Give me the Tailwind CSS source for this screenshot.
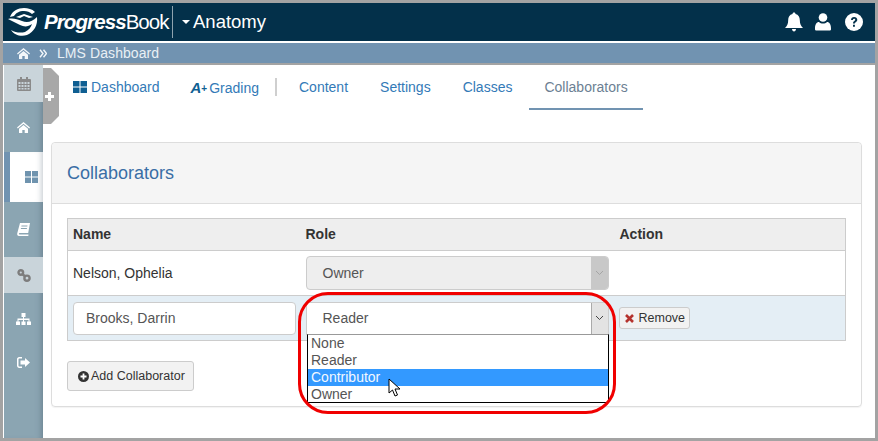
<!DOCTYPE html>
<html lang="en">
<head>
  <meta charset="UTF-8" />
  <title>Collaborators</title>
  <script src="https://cdn.jsdelivr.net/npm/@tailwindcss/browser@4"></script>
</head>
<body class="bg-[#a3a3a3] font-['Liberation_Sans',Arial,sans-serif]">
  <div class="w-[878px] h-[441px] pt-[3px] pl-[3px] pr-[3px] pb-[3px] overflow-hidden">
    <div class="relative w-[872px] h-[435px] bg-white flex flex-col overflow-hidden">

      <!-- top bar -->
      <header class="h-[38px] bg-[#03304a] flex items-center text-white shrink-0">
        <svg class="ml-[4px] w-[31px] h-[30px]" viewBox="0 0 31 30" fill="white">
          <path d="M3 10C5 4 11 1 17 1c4 0 8 1 11 4l-3 2c-2-2-5-3-8-3C12 4 9 6 7 9z"/>
          <path d="M9 10l8-3 9 3-4 1-5-2-4 2z"/>
          <path d="M1 12c5-1 9 0 14 2 5 2 10 1 15-4 1 8-3 15-10 18-6 2-13 0-16-5 5 3 10 3 14 2 4-2 6-5 7-8-4 3-8 3-12 1-4-2-8-4-12-6z"/>
        </svg>
        <div class="ml-[6px] w-[128px] text-[20.5px] leading-none tracking-[-0.9px] italic font-bold whitespace-nowrap">Progress<span class="font-normal not-italic tracking-[-1px]">Book</span></div>
        <div class="w-px h-[32px] bg-[#8fa3af]"></div>
        <div class="ml-[9px] w-0 h-0 border-x-[4px] border-x-transparent border-t-[4px] border-t-white"></div>
        <div class="ml-[3px] text-[18.5px] leading-none">Anatomy</div>
        <div class="ml-auto flex items-center">
          <svg class="w-[20px] h-[20px]" viewBox="0 0 20 20" fill="white"><path d="M10 0.500c1 0 1.500.700 1.500 1.500 3 .7 4.300 3 4.300 6 0 4 1.200 6 3.200 8H1c2-2 3.200-4 3.200-8 0-3 1.300-5.300 4.300-6 0-.8.500-1.500 1.500-1.500z"/><path d="M8 17h4c0 1.500-1 2.500-2 2.500S8 18.500 8 17z"/></svg>
          <svg class="ml-[11px] w-[16px] h-[18px]" viewBox="0 0 16 18" fill="white"><circle cx="8" cy="4.500" r="4.300"/><path d="M1 17.500c-1 0-1-1-1-2 0-4 1.500-6.500 4-6.500 1 1 2.500 1.600 4 1.600S11 10 12 9c2.500 0 4 2.500 4 6.500 0 1 0 2-1 2z"/></svg>
          <svg class="ml-[14px] mr-[12px] w-[18px] h-[18px]" viewBox="0 0 18 18"><circle cx="9" cy="9" r="9" fill="white"/><path d="M6 7c0-2 1.300-3 3.100-3C11 4 12.300 5.100 12.300 6.800c0 2.300-2.400 2.300-2.400 3.800H8c0-2.600 2.200-2.600 2.200-3.800 0-.6-.5-1-1.100-1-.7 0-1.100.4-1.200 1.200zM8 11.800h1.900v2H8z" fill="#03304a"/></svg>
        </div>
      </header>

      <div class="h-[2px] bg-white shrink-0"></div>

      <!-- breadcrumb -->
      <div class="h-[20px] bg-[#7193b1] flex items-center text-[#e9f0f5] text-[14px] shrink-0">
        <svg class="ml-[14px] w-[13px] h-[11px]" viewBox="0 0 13 11" fill="#f2f6f9"><path d="M6.500 0L13 5.600l-.8.900L6.500 1.700.8 6.500 0 5.600z"/><path d="M2 6.700l4.500-3.800L11 6.700V11H7.700V8H5.300v3H2z"/></svg>
        <svg class="ml-[9px] w-[8px] h-[9px]" viewBox="0 0 8 9" fill="none" stroke="#f2f6f9" stroke-width="1.400"><path d="M1 .7l3 3.800-3 3.800M4.500 .7l3 3.800-3 3.800"/></svg>
        <span class="ml-[10px] leading-none tracking-[0.08px]">LMS Dashboard</span>
      </div>

      <div class="h-[2px] bg-[#a3a3a3] shrink-0"></div>

      <div class="flex flex-1 min-h-0">
        <!-- left nav -->
        <nav class="w-[39px] ml-px bg-[#8ba5b2] shrink-0 flex flex-col shadow-[inset_-6px_0_6px_-5px_rgba(70,90,105,0.5)]">
          <div class="h-[37px] bg-[#c9d4da] flex items-center justify-center">
            <svg class="w-[14px] h-[14px]" viewBox="0 0 14 14" fill="#8a8a8a"><path fill-rule="evenodd" d="M1 2h2V0h2v2h4V0h2v2h2a1 1 0 0 1 1 1v10a1 1 0 0 1-1 1H1a1 1 0 0 1-1-1V3a1 1 0 0 1 1-1zm.500 3v2h2V5zm3 0v2h2V5zm3 0v2h2V5zm3 0v2h2V5zm-9 3v2h2V8zm3 0v2h2V8zm3 0v2h2V8zm3 0v2h2V8zm-9 3v1.500h2V11zm3 0v1.500h2V11zm3 0v1.500h2V11zm3 0v1.500h2V11z"/></svg>
          </div>
          <div class="h-[50px] flex items-center justify-center">
            <svg class="w-[13px] h-[11px]" viewBox="0 0 13 11" fill="white"><path d="M6.500 0L13 5.600l-.8.900L6.500 1.700.8 6.500 0 5.600z"/><path d="M2 6.700l4.500-3.800L11 6.700V11H7.700V8H5.300v3H2z"/></svg>
          </div>
          <div class="h-[50px] bg-white flex items-center border-l-[6px] border-l-[#7193b1] shadow-[inset_-6px_0_6px_-5px_rgba(70,90,105,0.35)]">
            <svg class="ml-[15px] w-[13px] h-[12px]" viewBox="0 0 13 12" fill="#6f93ae"><path d="M0 0h6v5.500H0zM7 0h6v5.500H7zM0 6.500h6V12H0zM7 6.500h6V12H7z"/></svg>
          </div>
          <div class="h-[55px] flex items-center justify-center">
            <svg class="w-[13px] h-[13px]" viewBox="0 0 13 13" fill="white"><path d="M3 0h10l-1.800 10H2.600c-.9 0-1 1.400 0 1.500h8.900l-.2 1.500H2C.5 13 0 12 .2 10.500zM4.500 2.500l-.2 1h6l.2-1zM4 5l-.2 1h6l.2-1z" fill-rule="evenodd"/></svg>
          </div>
          <div class="h-[36px] bg-[#c9d4da] flex items-center justify-center">
            <svg class="w-[14px] h-[13px]" viewBox="0 0 14 13" fill="none" stroke="#7d7d7d" stroke-width="2.400"><circle cx="3.800" cy="3.500" r="2.300"/><circle cx="10" cy="9.200" r="2.600"/><path d="M5.500 5.200l2.500 2"/></svg>
          </div>
          <div class="h-[52px] flex items-center justify-center">
            <svg class="w-[15px] h-[12px]" viewBox="0 0 15 12" fill="white"><path d="M5.500 0h4v4H8v1.500h5.500V8.500H15V12h-4V8.500h1.500V7H8v1.500h1.500V12h-4V8.500H7V7H2.500v1.500H4V12H0V8.500h1.500V5.500H7V4H5.500z"/></svg>
          </div>
          <div class="h-[34px] flex items-center justify-center">
            <svg class="w-[13px] h-[11px]" viewBox="0 0 13 11" fill="white"><path d="M5 0v1.500H2.500c-.6 0-1 .4-1 1v6c0 .6.400 1 1 1H5V11H2.200C1 11 0 10 0 8.800V2.200C0 1 1 0 2.200 0zM8 1l5 4.500L8 10V7.500H3.500v-4H8z"/></svg>
          </div>
        </nav>

        <!-- content -->
        <main class="flex-1 min-w-0 pl-[8px] pr-[13px]">
          <div class="h-[45px] flex items-start text-[14px] text-[#337ab7] leading-none">
            <div class="flex items-center ml-[22px] mt-[15px]">
              <svg class="w-[14px] h-[12px] mr-[4px]" viewBox="0 0 14 12" fill="#0f5f92"><path d="M0 0h6.500v5.500H0zM7.500 0H14v5.500H7.500zM0 6.500h6.500V12H0zM7.500 6.500H14V12H7.500z"/></svg>
              <span>Dashboard</span>
            </div>
            <div class="flex items-center ml-[31px] mt-[15px]">
              <span class="font-bold italic text-[15px] leading-none text-[#0f5f92]">A</span><span class="text-[10px] leading-none text-[#0f5f92] font-bold mt-[3px]">+</span>
              <span class="ml-[2px]">Grading</span>
            </div>
            <div class="ml-[16px] mt-[13px] w-[2px] h-[18px] bg-[#cfcfcf]"></div>
            <div class="ml-[22px] mt-[15px]">Content</div>
            <div class="ml-[32px] mt-[15px]">Settings</div>
            <div class="ml-[32px] mt-[15px]">Classes</div>
            <div class="ml-[17px] pt-[15px] px-[15px] h-[45px] border-b-[2px] border-b-[#7193b1] text-[#6c7f93]">Collaborators</div>
          </div>

          <!-- panel -->
          <section class="mt-[32px] h-[265px] border border-[#dddddd] rounded-[4px] shadow-[0_1px_1px_rgba(0,0,0,0.05)]">
            <div class="h-[61px] bg-[#f5f5f5] border-b border-b-[#dddddd] rounded-t-[4px] flex items-center pl-[15px]">
              <h2 class="text-[18px] leading-none text-[#3a6ea5]">Collaborators</h2>
            </div>
            <div class="pt-[14px] px-[15px]">
              <table class="w-[779px] table-fixed border-collapse border border-[#cccccc] text-[14px] text-[#333333]">
                <thead>
                  <tr class="h-[32px] bg-[#eeeeee] text-left">
                    <th class="w-[233px] pl-[5px] font-bold">Name</th>
                    <th class="w-[313px] pl-[5px] font-bold">Role</th>
                    <th class="pl-[6px] font-bold">Action</th>
                  </tr>
                </thead>
                <tbody>
                  <tr class="h-[45px] border-t border-t-[#cccccc]">
                    <td class="pl-[5px]">Nelson, Ophelia</td>
                    <td class="pl-[5px]">
                      <div class="w-[303px] h-[34px] bg-[#eeeeee] border border-[#cccccc] rounded-[4px] flex items-center justify-between text-[#555555] overflow-hidden">
                        <span class="pl-[16px]">Owner</span>
                        <span class="w-[17px] h-full bg-[#c8c8c8] flex items-center justify-center">
                          <svg class="w-[9px] h-[6px]" viewBox="0 0 9 6" fill="none" stroke="#a5a5a5" stroke-width="1"><path d="M1 1l3.500 3.500L8 1"/></svg>
                        </span>
                      </div>
                    </td>
                    <td></td>
                  </tr>
                  <tr class="h-[45px] bg-[#e4eef5] border-t border-t-[#cccccc]">
                    <td class="pl-[5px]">
                      <div class="w-[223px] h-[33px] bg-white border border-[#cccccc] rounded-[4px] flex items-center pl-[12px] text-[#555555]">Brooks, Darrin</div>
                    </td>
                    <td class="pl-[5px]">
                      <div class="w-[303px] h-[33px] bg-white border border-[#cccccc] flex items-center justify-between text-[#555555]">
                        <span class="pl-[16px]">Reader</span>
                        <span class="w-[17px] h-full bg-[#e3e3e3] border-l border-l-[#aaaaaa] flex items-center justify-center">
                          <svg class="w-[9px] h-[6px]" viewBox="0 0 9 6" fill="none" stroke="#444444" stroke-width="1"><path d="M1 1l3.500 3.500L8 1"/></svg>
                        </span>
                      </div>
                    </td>
                    <td class="pl-[5px]">
                      <div class="w-[71px] h-[22px] bg-[#f2f2f2] border border-[#cccccc] rounded-[3px] flex items-center pl-[5px] text-[12.5px] text-[#333333]">
                        <svg class="w-[9px] h-[9px] mr-[5px]" viewBox="0 0 9 9" fill="none" stroke="#b5332e" stroke-width="2.600"><path d="M1 1l7 7M8 1L1 8"/></svg>
                        Remove
                      </div>
                    </td>
                  </tr>
                </tbody>
              </table>
              <div class="mt-[20px] w-[127px] h-[30px] bg-[#f2f2f2] border border-[#cccccc] rounded-[3px] flex items-center pl-[10px] text-[12.5px] text-[#333333]">
                <svg class="w-[11px] h-[11px] mr-[2px]" viewBox="0 0 11 11"><circle cx="5.500" cy="5.500" r="5.500" fill="#333333"/><path d="M2.500 5.500h6M5.500 2.500v6" stroke="white" stroke-width="1.800"/></svg>
                Add Collaborator
              </div>
            </div>
          </section>
        </main>
      </div>

      <!-- collapsed side tab -->
      <div class="absolute left-[40px] top-[65px] w-[16px] h-[56px] bg-[#a8a8a8] [clip-path:polygon(0_0,8px_0,100%_8px,100%_calc(100%-8px),8px_100%,0_100%)] flex items-center justify-center text-white">
        <svg class="w-[9px] h-[9px] -ml-[4px]" viewBox="0 0 9 9" fill="white"><path d="M3 0h3v3h3v3H6v3H3V6H0V3h3z"/></svg>
      </div>

      <!-- open select list -->
      <ul class="absolute left-[304px] top-[331px] w-[302px] h-[69px] bg-white border border-black border-t-[#999999] text-[14px] leading-[17px] text-[#555555]">
        <li class="pl-[3px]">None</li>
        <li class="pl-[3px]">Reader</li>
        <li class="pl-[3px] bg-[#3399ff] text-[#f2f8ff]">Contributor</li>
        <li class="pl-[3px]">Owner</li>
      </ul>

      <!-- callout -->
      <div class="absolute left-[295px] top-[289px] w-[318px] h-[122px] border-[3px] border-[#f00000] rounded-[30px]"></div>

      <!-- mouse pointer -->
      <svg class="absolute left-[385px] top-[375px] w-[13px] h-[20px]" viewBox="0 0 13 20"><path d="M1 1v14l3.500-3 2.500 6 2.500-1-2.500-6H12z" fill="white" stroke="black" stroke-width="1"/></svg>
    </div>
  </div>
</body>
</html>
